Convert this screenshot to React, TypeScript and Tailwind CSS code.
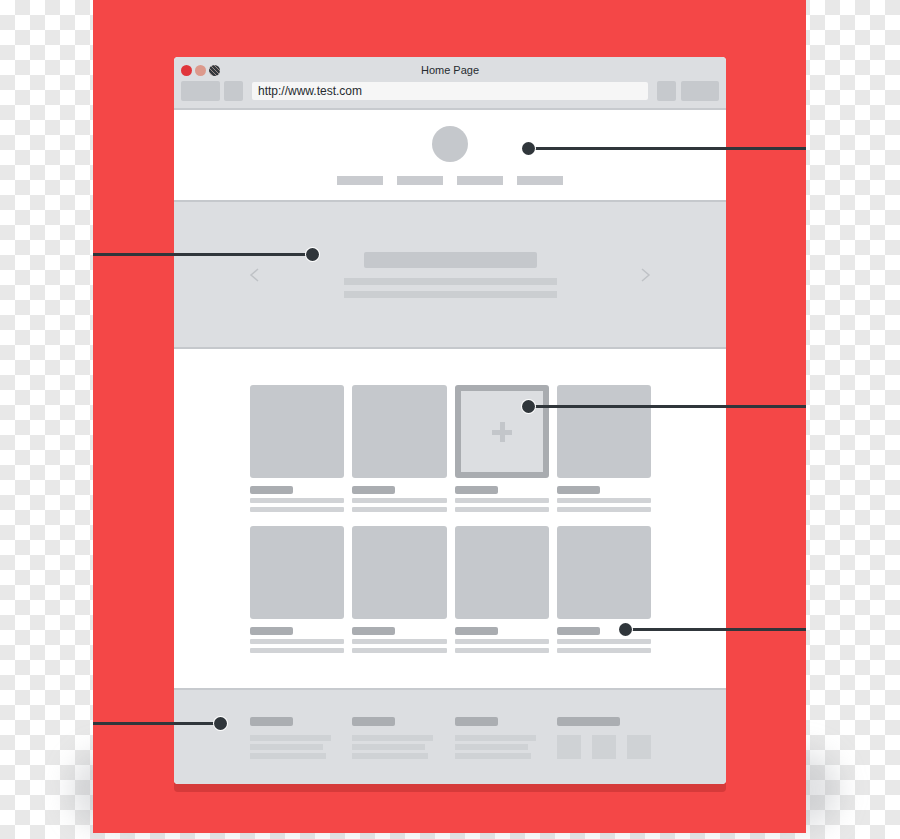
export default function App() {
  return (
    <div className="relative h-[839px] w-[900px] overflow-hidden bg-[image:conic-gradient(#e8e8e8_25%,#ffffff_0_50%,#e8e8e8_0_75%,#ffffff_0)] bg-size-[30px_30px] font-['Liberation_Sans',Arial,sans-serif]">
      {/* soft shadow under the red board */}
      <div className="absolute left-[70px] top-[750px] h-[80px] w-[770px] rounded-[40px] bg-[#9aa0a6]/30 blur-[14px]" />

      <div className="relative ml-[93px] h-[833px] w-[713px] bg-[#f44747] pt-[57px] pl-[81px]">
        <BrowserWindow />

        {/* callout lines */}
        <Callout side="right" x={435} y={148} />
        <Callout side="left" x={219} y={254} />
        <Callout side="right" x={435} y={406} />
        <Callout side="right" x={532} y={629} />
        <Callout side="left" x={127} y={723} />
      </div>
    </div>
  );
}

function Callout({ side, x, y }: { side: "left" | "right"; x: number; y: number }) {
  const lineStyle =
    side === "right"
      ? { left: x, top: y - 1, width: 713 - x }
      : { left: 0, top: y - 1, width: x };
  return (
    <>
      <div className="absolute h-[3px] bg-[#30363b]" style={lineStyle} />
      <div
        className="absolute h-[13px] w-[13px] rounded-full bg-[#30363b] ring-1 ring-white"
        style={{ left: x - 6.5, top: y - 6 }}
      />
    </>
  );
}

function BrowserWindow() {
  return (
    <div className="w-[552px] rounded-[4px] bg-white shadow-[0_8px_0_#d63a3a]">
      {/* title bar */}
      <div className="rounded-t-[4px] border-b-2 border-[#c7cace] bg-[#dcdee1] px-[7px] pt-[8px] pb-[7px]">
        <div className="grid h-[11px] grid-cols-[1fr_auto_1fr] items-center">
          <div className="flex gap-[3px]">
            <span className="h-[11px] w-[11px] rounded-full bg-[#e0353b]" />
            <span className="h-[11px] w-[11px] rounded-full bg-[#dc998c]" />
            <span className="h-[11px] w-[11px] rounded-full bg-[repeating-linear-gradient(45deg,#33383d_0_2px,#9c8c88_2px_3px)]" />
          </div>
          <div className="text-[11px] leading-none font-medium text-[#262b30]">Home Page</div>
          <div />
        </div>
        <div className="mt-[5px] flex h-[20px] items-center">
          <div className="h-[20px] w-[39px] rounded-[2px] bg-[#c6c9cd]" />
          <div className="ml-[4px] h-[20px] w-[19px] rounded-[2px] bg-[#c6c9cd]" />
          <div className="ml-[9px] flex h-[18px] flex-1 items-center rounded-[2px] bg-[#f6f6f6] pl-[6px] text-[12px] leading-none text-[#262b30]">
            http://www.test.com
          </div>
          <div className="ml-[9px] h-[20px] w-[19px] rounded-[2px] bg-[#c6c9cd]" />
          <div className="ml-[5px] h-[20px] w-[38px] rounded-[2px] bg-[#c6c9cd]" />
        </div>
      </div>

      {/* header */}
      <div className="flex h-[90px] flex-col items-center pt-[16px]">
        <div className="h-[36px] w-[36px] rounded-full bg-[#c5c8cc]" />
        <div className="mt-[14px] flex gap-[14px]">
          <div className="h-[9px] w-[46px] bg-[#c9cbcf]" />
          <div className="h-[9px] w-[46px] bg-[#c9cbcf]" />
          <div className="h-[9px] w-[46px] bg-[#c9cbcf]" />
          <div className="h-[9px] w-[46px] bg-[#c9cbcf]" />
        </div>
      </div>

      {/* hero slider */}
      <div className="flex h-[149px] items-center justify-between border-y-2 border-[#c5c8cc] bg-[#dcdee1] px-[75px]">
        <svg width="10" height="14" viewBox="0 0 10 14" fill="none">
          <path d="M9 1L2 7l7 6" stroke="#bfc2c6" strokeWidth="1.5" />
        </svg>
        <div className="flex w-[213px] flex-col items-center">
          <div className="h-[16px] w-[173px] rounded-[2px] bg-[#c5c8cc]" />
          <div className="mt-[10px] h-[7px] w-full bg-[#cbced1]" />
          <div className="mt-[6px] h-[7px] w-full bg-[#cbced1]" />
        </div>
        <svg width="10" height="14" viewBox="0 0 10 14" fill="none">
          <path d="M1 1l7 6-7 6" stroke="#bfc2c6" strokeWidth="1.5" />
        </svg>
      </div>

      {/* product grid */}
      <div className="pl-[76px] pt-[36px] pb-[35px]">
        <div className="grid w-[401px] grid-cols-4 gap-x-[8px] gap-y-[14px]">
          <Card />
          <Card />
          <Card featured />
          <Card />
          <Card />
          <Card />
          <Card />
          <Card />
        </div>
      </div>

      {/* footer */}
      <div className="rounded-b-[4px] border-t-2 border-[#c7cace] bg-[#dcdee1] pl-[76px] pt-[27px] pb-[25px]">
        <div className="grid w-[401px] grid-cols-4 gap-x-[8px]">
          <FooterCol />
          <FooterCol />
          <FooterCol />
          <div>
            <div className="h-[9px] w-[63px] rounded-[2px] bg-[#abaeb2]" />
            <div className="mt-[9px] flex gap-[11px]">
              <div className="h-[24px] w-[24px] bg-[#cfd2d5]" />
              <div className="h-[24px] w-[24px] bg-[#cfd2d5]" />
              <div className="h-[24px] w-[24px] bg-[#cfd2d5]" />
            </div>
          </div>
        </div>
      </div>
    </div>
  );
}

function Card({ featured = false }: { featured?: boolean }) {
  return (
    <div>
      {featured ? (
        <div className="flex h-[93px] items-center justify-center rounded-[3px] border-[6px] border-[#a9acb0] bg-[#dcdee1]">
          <div className="relative h-[20px] w-[20px]">
            <div className="absolute left-0 top-[8px] h-[5px] w-[20px] bg-[#c3c6ca]" />
            <div className="absolute left-[8px] top-0 h-[20px] w-[5px] bg-[#c3c6ca]" />
          </div>
        </div>
      ) : (
        <div className="h-[93px] rounded-[3px] bg-[#c5c8cc]" />
      )}
      <div className="mt-[8px] h-[8px] w-[43px] rounded-[2px] bg-[#aaadb1]" />
      <div className="mt-[4px] h-[5px] w-full rounded-[1px] bg-[#d1d3d6]" />
      <div className="mt-[4px] h-[5px] w-full rounded-[1px] bg-[#d1d3d6]" />
    </div>
  );
}

function FooterCol() {
  return (
    <div>
      <div className="h-[9px] w-[43px] rounded-[2px] bg-[#abaeb2]" />
      <div className="mt-[9px] h-[6px] w-[81px] bg-[#cfd2d5]" />
      <div className="mt-[3px] h-[6px] w-[73px] bg-[#cfd2d5]" />
      <div className="mt-[3px] h-[6px] w-[76px] bg-[#cfd2d5]" />
    </div>
  );
}
